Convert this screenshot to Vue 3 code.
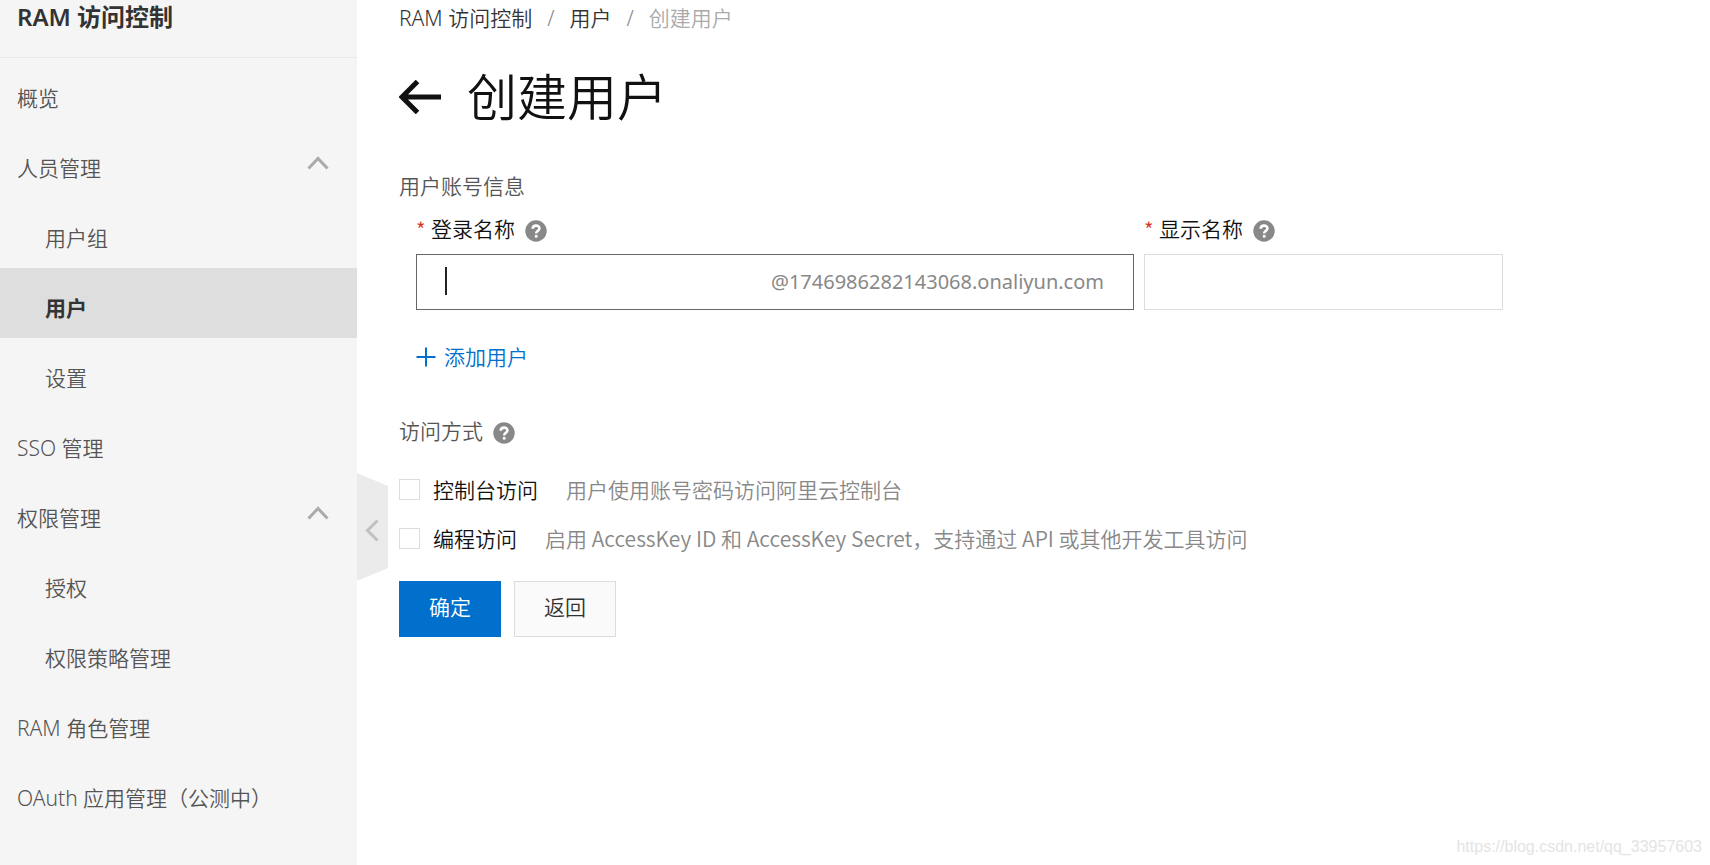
<template>
  <div class="layout">
    <aside class="sidebar">
      <h2 class="sidebar-title">RAM 访问控制</h2>
      <nav class="menu">
        <template v-for="item in menu" :key="item.text">
          <button
            v-if="item.children"
            type="button"
            class="menu-item group"
            :aria-expanded="item.open"
            @click="item.open = !item.open"
          >
            <span class="menu-text">{{ item.text }}</span>
            <svg class="chevron" :class="{ closed: !item.open }" viewBox="0 0 22 14">
              <path d="M1.5 12.5 L11 2.5 L20.5 12.5" />
            </svg>
          </button>
          <a v-else href="#" class="menu-item" @click.prevent="active = item.text">
            <span class="menu-text">{{ item.text }}</span>
          </a>
          <template v-if="item.children && item.open">
            <a
              v-for="child in item.children"
              :key="child"
              href="#"
              class="menu-item child"
              :class="{ active: active === child }"
              @click.prevent="active = child"
            >
              <span class="menu-text">{{ child }}</span>
            </a>
          </template>
        </template>
      </nav>
      <button type="button" class="collapse" aria-label="收起">
        <svg viewBox="0 0 31 108">
          <path class="collapse-bg" d="M0 0 L31 13 V95 L0 108 Z" />
          <path class="collapse-arrow" d="M20.5 47.5 L10.5 57.5 L20.5 67.5" />
        </svg>
      </button>
    </aside>

    <main class="content">
      <nav class="breadcrumb">
        <a href="#">RAM 访问控制</a>
        <span class="slash">/</span>
        <a href="#">用户</a>
        <span class="slash">/</span>
        <span class="current">创建用户</span>
      </nav>

      <header class="page-header">
        <button type="button" class="back" aria-label="返回">
          <svg viewBox="0 0 42 34">
            <path d="M18.500 1.500 L3 17 L18.500 32.500 M3 17 H42" />
          </svg>
        </button>
        <h1>创建用户</h1>
      </header>

      <form @submit.prevent>
        <h3 class="section-title">用户账号信息</h3>

        <div class="fields">
          <div class="field">
            <label for="loginName">
              <span class="required">*</span>
              登录名称
              <svg class="help" viewBox="0 0 22 22">
                <circle cx="11" cy="11" r="10.7" />
                <path d="M7.700 8.700 C7.700 4.600 14.400 4.700 14.400 8.400 C14.400 10.800 11.200 10.900 11.200 13.400" />
                <rect x="9.900" y="15" width="2.600" height="2.600" />
              </svg>
            </label>
            <div class="login-box">
              <span class="caret"></span>
              <input id="loginName" v-model="loginName" type="text" />
              <span class="suffix">@1746986282143068.onaliyun.com</span>
            </div>
          </div>
          <div class="field">
            <label for="displayName">
              <span class="required">*</span>
              显示名称
              <svg class="help" viewBox="0 0 22 22">
                <circle cx="11" cy="11" r="10.7" />
                <path d="M7.700 8.700 C7.700 4.600 14.400 4.700 14.400 8.400 C14.400 10.800 11.200 10.900 11.200 13.400" />
                <rect x="9.900" y="15" width="2.600" height="2.600" />
              </svg>
            </label>
            <input id="displayName" v-model="displayName" type="text" class="display-box" />
          </div>
        </div>

        <button type="button" class="add-user">
          <svg viewBox="0 0 20 20">
            <path d="M10 0.500 V19.500 M0.500 10 H19.500" />
          </svg>
          添加用户
        </button>

        <h3 class="section-title access">
          访问方式
          <svg class="help" viewBox="0 0 22 22">
            <circle cx="11" cy="11" r="10.7" />
            <path d="M7.700 8.700 C7.700 4.600 14.400 4.700 14.400 8.400 C14.400 10.800 11.200 10.900 11.200 13.400" />
            <rect x="9.900" y="15" width="2.600" height="2.600" />
          </svg>
        </h3>

        <div v-for="mode in modes" :key="mode.id" class="mode">
          <input :id="mode.id" v-model="mode.checked" type="checkbox" />
          <label :for="mode.id">{{ mode.name }}</label>
          <span class="desc">{{ mode.desc }}</span>
        </div>

        <div class="actions">
          <button type="submit" class="btn primary">确定</button>
          <button type="button" class="btn">返回</button>
        </div>
      </form>
    </main>

    <span class="watermark">https://blog.csdn.net/qq_33957603</span>
  </div>
</template>

<script setup>
import { ref, reactive } from "vue";

const active = ref("用户");
const loginName = ref("");
const displayName = ref("");

const menu = reactive([
  { text: "概览" },
  { text: "人员管理", open: true, children: ["用户组", "用户", "设置"] },
  { text: "SSO 管理" },
  { text: "权限管理", open: true, children: ["授权", "权限策略管理"] },
  { text: "RAM 角色管理" },
  { text: "OAuth 应用管理（公测中）" },
]);

const modes = reactive([
  {
    id: "console",
    name: "控制台访问",
    desc: "用户使用账号密码访问阿里云控制台",
    checked: false,
  },
  {
    id: "api",
    name: "编程访问",
    desc: "启用 AccessKey ID 和 AccessKey Secret，支持通过 API 或其他开发工具访问",
    checked: false,
  },
]);
</script>

<style>
body {
  margin: 0;
  background: #fff;
}
</style>

<style scoped>
* {
  box-sizing: border-box;
}

.layout {
  position: relative;
  display: flex;
  min-height: 100vh;
  font-family: "Noto Sans", "Noto Sans CJK SC", sans-serif;
  font-size: 21px;
  font-weight: 350;
  line-height: 32px;
  color: #111;
}

button,
input {
  font: inherit;
  color: inherit;
}

button {
  padding: 0;
  border: none;
  background: none;
  cursor: pointer;
}

a {
  color: inherit;
  text-decoration: none;
}

h1,
h2,
h3 {
  margin: 0;
  font-weight: inherit;
}

svg {
  display: block;
  fill: none;
}

/* sidebar */
.sidebar {
  position: relative;
  flex: none;
  width: 357px;
  background: #f5f5f5;
  color: #555;
}

.sidebar-title {
  padding: 0 17px 23px;
  border-bottom: 1px solid #e8e8e8;
  font-size: 24px;
  font-weight: 600;
  line-height: 34px;
  color: #333;
}

.menu-item {
  display: flex;
  align-items: center;
  justify-content: space-between;
  width: 100%;
  height: 70px;
  padding: 0 28px 0 17px;
  text-align: left;
}

.menu-text {
  padding-top: 10px;
}

.child {
  padding-left: 45px;
}

.active {
  background: #dedede;
  color: #333;
  font-weight: 700;
}

.chevron {
  width: 22px;
  height: 14px;
  stroke: #aaa;
  stroke-width: 3;
}

.chevron.closed {
  transform: rotate(180deg);
}

.collapse {
  position: absolute;
  top: 473px;
  left: 100%;
  width: 31px;
  height: 108px;
}

.collapse-bg {
  fill: #ebebeb;
}

.collapse-arrow {
  stroke: #c0c0c0;
  stroke-width: 3;
}

/* content */
.content {
  flex: 1;
  min-width: 0;
  padding: 0 42px;
}

.breadcrumb {
  display: flex;
  gap: 15px;
  line-height: 36px;
  color: #333;
}

.slash {
  color: #888;
}

.current {
  color: #aaa;
}

.page-header {
  display: flex;
  align-items: center;
  gap: 26px;
  margin-top: 27px;
}

.page-header h1 {
  font-size: 50px;
  line-height: 68px;
}

.back svg {
  width: 42px;
  height: 34px;
  stroke: #111;
  stroke-width: 5;
}

.section-title {
  display: flex;
  align-items: center;
  margin-top: 39px;
  font-size: 21px;
  color: #555;
}

.fields {
  display: grid;
  grid-template-columns: 2fr 1fr;
  gap: 10px;
  max-width: 1104px;
  margin-top: 11px;
  padding-left: 17px;
}

.field label {
  display: flex;
  align-items: center;
  margin-bottom: 9px;
}

.required {
  width: 15px;
  font-family: "Noto Sans CJK SC", sans-serif;
  color: #d93026;
}

.help {
  width: 22px;
  height: 22px;
  margin: 3px 0 0 10px;
  stroke: #fff;
  stroke-width: 2.6;
}

.help circle {
  fill: #888;
  stroke: none;
}

.help rect {
  fill: #fff;
  stroke: none;
}

.login-box {
  position: relative;
  display: flex;
  align-items: center;
  height: 56px;
  padding: 0 29px;
  border: 1px solid #666;
}

.login-box input {
  flex: 1;
  min-width: 0;
  padding: 0;
  border: none;
  outline: none;
  background: none;
}

.caret {
  position: absolute;
  top: 12px;
  left: 28px;
  width: 2px;
  height: 28px;
  background: #222;
}

.suffix {
  font-size: 20px;
  font-weight: 400;
  color: #888;
}

.display-box {
  display: block;
  width: 100%;
  height: 56px;
  padding: 0 28px;
  border: 1px solid #ddd;
  outline: none;
}

.add-user {
  display: flex;
  align-items: center;
  gap: 8px;
  margin: 31px 0 0 17px;
  color: #0070cc;
}

.add-user svg {
  width: 20px;
  height: 20px;
  stroke: #0070cc;
  stroke-width: 2;
}

.access {
  margin: 42px 0 18px;
}

.mode {
  display: flex;
  align-items: center;
  height: 49px;
}

.mode input {
  flex: none;
  width: 21px;
  height: 21px;
  margin: 0 13px 0 0;
  border: 1px solid #ddd;
  appearance: none;
  background: #fff;
}

.mode input:checked {
  border-color: #0070cc;
  background: #0070cc;
}

.desc {
  margin-left: 28px;
  padding-bottom: 2px;
  font-family: "Noto Sans CJK SC", sans-serif;
  color: #888;
}

.actions {
  display: flex;
  gap: 13px;
  margin-top: 18px;
}

.btn {
  height: 56px;
  padding: 0 29px 4px;
  border: 1px solid #ddd;
  background: #fafafa;
  color: #333;
}

.primary {
  border-color: #0070cc;
  background: #0070cc;
  color: #fff;
}

.watermark {
  position: absolute;
  right: 8px;
  bottom: 2px;
  font-family: "Liberation Sans", sans-serif;
  font-size: 16px;
  font-weight: 400;
  color: #e4e4e4;
}
</style>
